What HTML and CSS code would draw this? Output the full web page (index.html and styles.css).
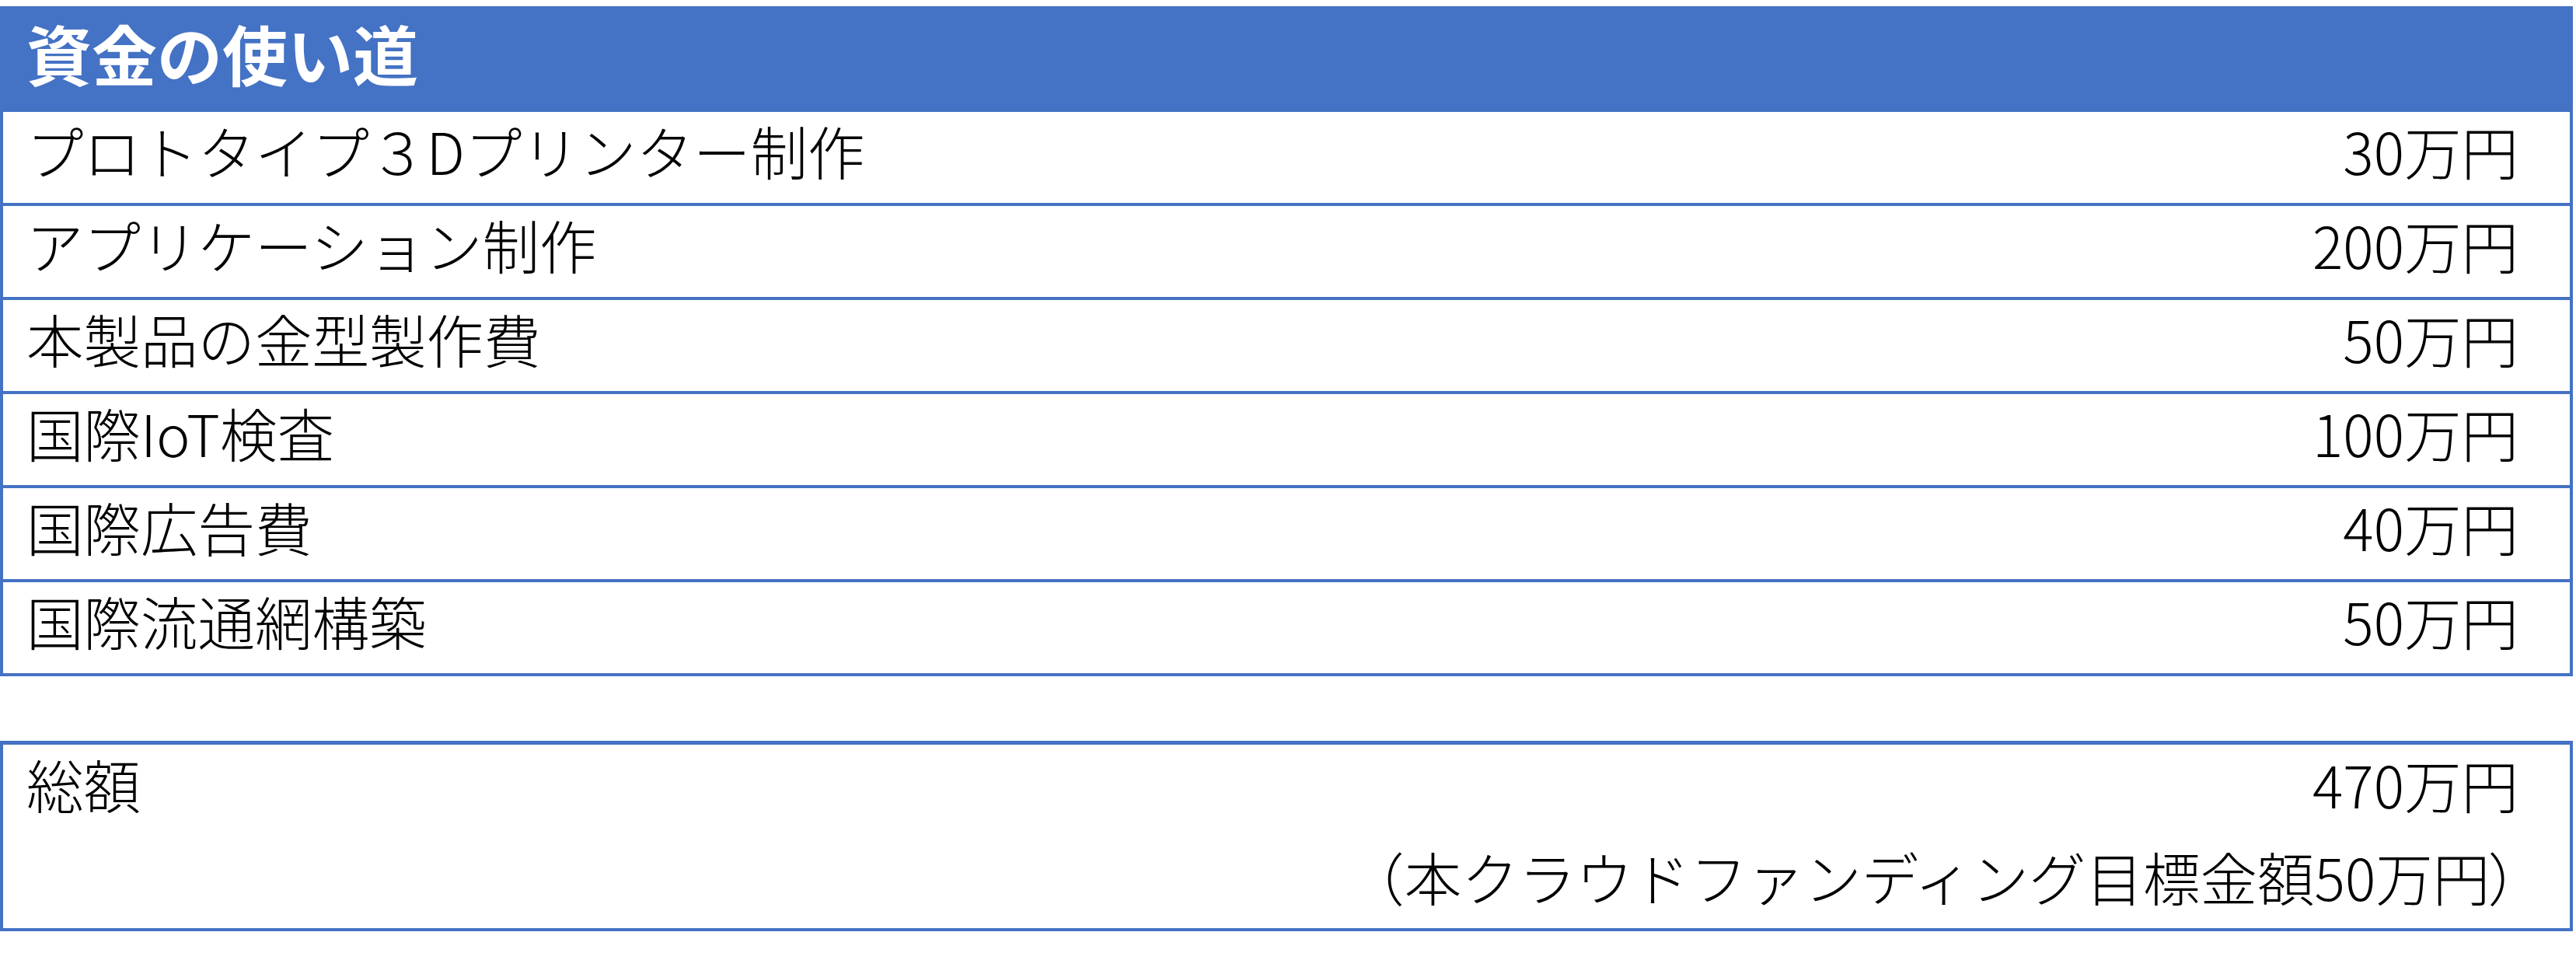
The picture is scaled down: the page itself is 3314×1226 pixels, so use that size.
FILE: index.html
```html
<!DOCTYPE html>
<html lang="ja">
<head>
<meta charset="utf-8">
<title>資金の使い道</title>
<link rel="stylesheet" href="styles.css">
</head>
<body>
<main class="page">
  <section class="table">
    <h1 class="table-head">資金の使い道</h1>
    <div class="row"><span class="label">プロトタイプ３Dプリンター制作</span><span class="amount">30万円</span></div>
    <div class="row"><span class="label">アプリケーション制作</span><span class="amount">200万円</span></div>
    <div class="row"><span class="label">本製品の金型製作費</span><span class="amount">50万円</span></div>
    <div class="row"><span class="label">国際IoT検査</span><span class="amount">100万円</span></div>
    <div class="row"><span class="label">国際広告費</span><span class="amount">40万円</span></div>
    <div class="row"><span class="label">国際流通網構築</span><span class="amount">50万円</span></div>
  </section>
  <section class="total">
    <div class="total-line"><span class="label">総額</span><span class="amount">470万円</span></div>
    <div class="total-note">（本クラウドファンディング目標金額50万円<span class="paren">）</span></div>
  </section>
</main>
</body>
</html>
```

FILE: styles.css
```css
html, body {
  margin: 0;
  padding: 0;
  background: #ffffff;
}

body {
  padding-top: 8px;
  font-family: "Noto Sans CJK JP", "Noto Sans", sans-serif;
  color: #000000;
}

.page {
  width: 3310px;
  display: flex;
  flex-direction: column;
  gap: 83px;
}

.table {
  display: flex;
  flex-direction: column;
}

.table-head {
  margin: 0;
  height: 136px;
  box-sizing: border-box;
  padding: 18px 0 0 34px;
  background: #4472c4;
  color: #ffffff;
  font-size: 84px;
  line-height: 84px;
  font-weight: 700;
}

.row {
  height: 121px;
  box-sizing: border-box;
  border: 4px solid #4472c4;
  border-top: none;
  padding: 13px 66px 0 30px;
  display: flex;
  justify-content: space-between;
  align-items: flex-start;
  font-size: 73.5px;
  line-height: 72px;
  font-weight: 300;
}

.total {
  box-sizing: border-box;
  border: 4px solid #4472c4;
  border-top-width: 5px;
  padding: 14px 66px 31px 30px;
  display: flex;
  flex-direction: column;
  gap: 47px;
  font-size: 73.5px;
  line-height: 72px;
  font-weight: 300;
}

.total-line {
  display: flex;
  justify-content: space-between;
}

.total-note {
  text-align: right;
}

.paren {
  font-feature-settings: "palt";
}
```
